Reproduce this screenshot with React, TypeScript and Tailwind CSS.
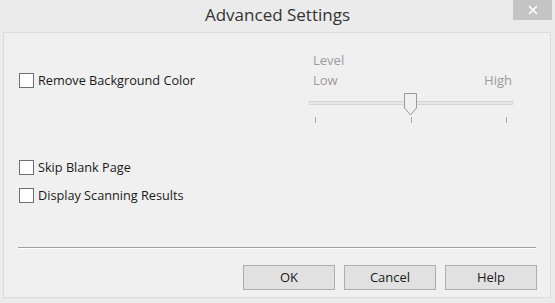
import React from "react";

function Check({ label }: { label: string }) {
  return (
    <div className="flex items-center h-[16px]">
      <div className="w-[15px] h-[15px] border border-[#707070] bg-white" />
      <span className="ml-[4px] text-[12.7px] text-[#1a1a1a] leading-none">{label}</span>
    </div>
  );
}

function Btn({ label }: { label: string }) {
  return (
    <div className="w-[92px] h-[25px] border border-[#adadad] bg-[#e1e1e1] flex items-center justify-center text-[13px] text-[#1a1a1a]">
      {label}
    </div>
  );
}

export default function App() {
  return (
    <div
      className="w-[555px] h-[303px] bg-[#ebebeb] flex flex-col overflow-hidden"
      style={{ fontFamily: '"Open Sans", "Liberation Sans", sans-serif' }}
    >
      <div className="h-[32px] relative flex items-center justify-center shrink-0">
        <span className="text-[17px] text-[#333] mt-[-2px]">Advanced Settings</span>
        <div className="absolute right-[3px] top-0 w-[39px] h-[20px] bg-[#c4c4c4] flex items-center justify-center">
          <svg width="10" height="10" viewBox="0 0 10 10">
            <path d="M1 1 L9 9 M9 1 L1 9" stroke="white" strokeWidth="1.6" />
          </svg>
        </div>
      </div>
      <div className="flex-1 ml-[3px] mr-[4px] mb-[5px] border border-[#dcdcdc] bg-[#f0f0f0] flex flex-col">
        <div className="flex">
          <div className="pl-[15px] pt-[39px] w-[305px]">
            <Check label="Remove Background Color" />
          </div>
          <div className="pt-[18px] w-[204px] text-[#9a9a9a] text-[13px]">
            <div className="pl-[4px] leading-[18px]">Level</div>
            <div className="flex justify-between pl-[4px] pr-[1px] leading-[18px] mt-[2px]">
              <span>Low</span>
              <span>High</span>
            </div>
            <div className="relative h-[32px] mt-[3px]">
              <div className="absolute left-0 right-0 top-[9px] h-[4px] border border-[#d6d6d6] bg-[#e7e7e7]" />
              <svg className="absolute left-[94px] top-0" width="16" height="26" viewBox="0 0 16 26">
                <path d="M1.5 1.5 H13.5 V16 L7.5 23 L1.5 16 Z" fill="#f0f0f0" stroke="#9a9a9a" strokeWidth="1" />
              </svg>
              <div className="absolute left-[6px] top-[25px] w-[1px] h-[6px] bg-[#aaa]" />
              <div className="absolute left-[102px] top-[25px] w-[1px] h-[6px] bg-[#aaa]" />
              <div className="absolute left-[197px] top-[25px] w-[1px] h-[6px] bg-[#aaa]" />
            </div>
          </div>
        </div>
        <div className="pl-[15px] mt-[35px] flex flex-col gap-[12px]">
          <Check label="Skip Blank Page" />
          <Check label="Display Scanning Results" />
        </div>
        <div className="mx-[14px] mt-[44px] h-[2px] border-t border-[#a0a0a0] border-b border-b-white" />
        <div className="flex justify-end gap-[9px] pr-[13px] mt-[16px]">
          <Btn label="OK" />
          <Btn label="Cancel" />
          <Btn label="Help" />
        </div>
      </div>
    </div>
  );
}
